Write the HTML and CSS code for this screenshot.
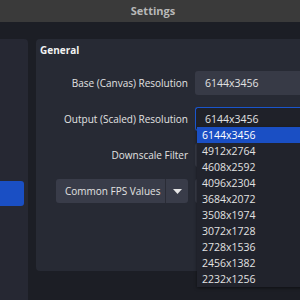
FILE: index.html
```html
<!DOCTYPE html>
<html lang="en">
<head>
    <meta charset="UTF-8">
    <title>Settings</title>
    <link rel="stylesheet" href="styles.css">
</head>
<body>
    <div class="titlebar">Settings</div>

    <div class="content">
        <div class="sidebar">
            <div class="nav-item selected"></div>
        </div>

        <div class="panel">
            <div class="panel-title">General</div>

            <div class="form">
                <label class="form-label">Base (Canvas) Resolution</label>
                <div class="field">6144x3456</div>

                <label class="form-label">Output (Scaled) Resolution</label>
                <div class="field combo open">6144x3456</div>

                <label class="form-label">Downscale Filter</label>
                <div class="field"></div>

                <div class="form-label">
                    <div class="split-btn">
                        <span class="split-text">Common FPS Values</span>
                        <span class="split-arrow">
                            <svg width="9" height="5" viewBox="0 0 9 5"><path d="M0 0 L9 0 L4.5 5 Z" fill="#e6e6e6"/></svg>
                        </span>
                    </div>
                </div>
                <div class="field"></div>
            </div>
        </div>
    </div>

    <ul class="popup">
        <li class="active">6144x3456</li>
        <li>4912x2764</li>
        <li>4608x2592</li>
        <li>4096x2304</li>
        <li>3684x2072</li>
        <li>3508x1974</li>
        <li>3072x1728</li>
        <li>2728x1536</li>
        <li>2456x1382</li>
        <li>2232x1256</li>
    </ul>
</body>
</html>
```

FILE: styles.css
```css
body {
    margin: 0;
    width: 300px;
    height: 300px;
    overflow: hidden;
    background: #1c1e25;
    font-family: "Open Sans", "Noto Sans", sans-serif;
    font-size: 10px;
    color: #e2e2e2;
    position: relative;
}
.titlebar {
    height: 22px;
    background: #3a3a3a;
    color: #b8b8b8;
    font-size: 11px;
    font-weight: bold;
    line-height: 21px;
    text-align: center;
    padding-left: 6px;
}
.content {
    display: flex;
    padding-top: 17px;
    height: 261px;
}
.sidebar {
    width: 28px;
    height: 261px;
    background: #262833;
    border-top-right-radius: 4px;
    padding-top: 142px;
    box-sizing: border-box;
}
.nav-item {
    height: 25px;
    width: 24px;
    border-radius: 0 3px 3px 0;
}
.nav-item.selected {
    background: #1a4fc4;
}
.panel {
    margin-left: 8px;
    flex: 1;
    height: 232px;
    background: #272a34;
    border-radius: 4px 0 0 4px;
    padding: 4px 0 0 4px;
    box-sizing: border-box;
}
.panel-title {
    font-size: 10px;
    font-weight: bold;
    color: #f2f2f2;
    height: 28px;
}
.form {
    display: grid;
    grid-template-columns: 152px 1fr;
    column-gap: 7px;
    row-gap: 12px;
    margin-left: -4px;
}
.form-label {
    text-align: right;
    line-height: 24px;
    display: flex;
    justify-content: flex-end;
}
.field {
    height: 24px;
    background: #373a46;
    border-radius: 3px 0 0 3px;
    font-size: 10.5px;
    line-height: 24px;
    padding-left: 10px;
}
.field.combo.open {
    background: #1f2129;
    border: 1px solid #1a55cc;
    border-right: none;
    height: 22px;
    line-height: 22px;
    padding-left: 9px;
}
.split-btn {
    display: flex;
    width: 132px;
    height: 24px;
    background: #393c49;
    border-radius: 3px;
    overflow: hidden;
    white-space: nowrap;
}
.split-text {
    flex: 1;
    text-align: left;
    padding-left: 9px;
}
.split-arrow {
    width: 22px;
    border-left: 1px solid #2a2c36;
    display: flex;
    align-items: center;
    justify-content: center;
}
.popup {
    position: absolute;
    left: 197px;
    top: 127px;
    width: 110px;
    margin: 0;
    padding: 0;
    list-style: none;
    background: #21232c;
    box-shadow: 0 1px 3px rgba(0,0,0,0.5);
    font-size: 10.5px;
}
.popup li {
    height: 16px;
    line-height: 16px;
    padding-left: 5px;
}
.popup li.active {
    background: #1a4fc4;
    color: #ffffff;
}
```
